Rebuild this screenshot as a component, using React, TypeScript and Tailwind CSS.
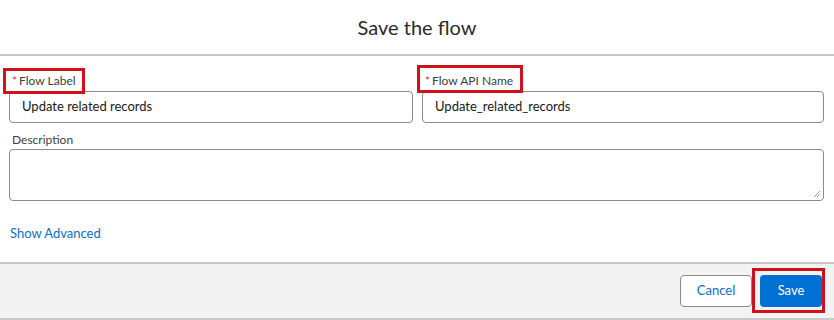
/**
 * "Save the flow" modal: flow label + API name, description, advanced link,
 * and the cancel/save footer. Red outlines are screenshot annotations.
 */
const FONT = { fontFamily: "Lato, 'Open Sans', sans-serif" };

function Label({ text, required }: { text: string; required?: boolean }) {
  return (
    <div className="flex h-[18px] items-center pl-[3px] text-[12px] leading-[18px] text-[#3e3e3c]">
      {required && <span className="mr-[2px] text-[#c23934]">*</span>}
      {text}
    </div>
  );
}

function TextField({ label, value }: { label: string; value: string }) {
  return (
    <div className="relative">
      <Label text={label} required />
      <div className="mt-px flex h-[32px] items-center rounded-[4px] border border-[#8c8c8c] bg-white px-[12px] text-[13px] text-[#181818]">
        {value}
      </div>
    </div>
  );
}

export default function App() {
  return (
    <div className="flex h-[320px] w-[834px] flex-col bg-white" style={FONT}>
      {/* header */}
      <div className="flex h-[56px] items-center justify-center border-b-2 border-[#c9c9c9]">
        <h2 className="text-[20px] text-[#2b2b2b]">Save the flow</h2>
      </div>

      {/* body */}
      <div className="relative flex-1 pl-[9px] pr-[10px] pt-[16px]">
        <div className="grid grid-cols-[404px_1fr] gap-[9px]">
          <TextField label="Flow Label" value="Update related records" />
          <TextField label="Flow API Name" value="Update_related_records" />
        </div>

        <div className="mt-[8px]">
          <Label text="Description" />
          <div className="relative h-[52px] rounded-[4px] border border-[#8c8c8c] bg-white">
            <svg className="absolute bottom-[2px] right-[2px]" width="9" height="9" viewBox="0 0 9 9">
              <path d="M8 2 L2 8 M8 5 L5 8" stroke="#9a9a9a" strokeWidth="1" />
            </svg>
          </div>
        </div>

        <div className="mt-[23px] pl-px text-[13px] leading-[18px] text-[#0b6fc2]">Show Advanced</div>

        {/* annotations */}
        <div className="pointer-events-none absolute left-[3px] top-[12px] h-[26px] w-[82px] border-[3px] border-[#d0101b]" />
        <div className="pointer-events-none absolute left-[417px] top-[9px] h-[28px] w-[106px] border-[3px] border-[#d0101b]" />
      </div>

      {/* footer */}
      <div className="relative flex h-[58px] items-center justify-end gap-[8px] border-y-2 border-[#c9c9c9] bg-[#f3f3f3] pr-[12px]">
        <button className="h-[32px] w-[72px] rounded-[4px] border border-[#8c8c8c] bg-white text-[13px] text-[#0b6fc2]">
          Cancel
        </button>
        <div className="relative">
          <button className="h-[32px] w-[62px] rounded-[4px] bg-[#0070d2] text-[13px] text-white">Save</button>
          <div className="pointer-events-none absolute -left-[8px] -top-[7px] h-[45px] w-[73px] border-[3px] border-[#d0101b]" />
        </div>
      </div>
    </div>
  );
}
